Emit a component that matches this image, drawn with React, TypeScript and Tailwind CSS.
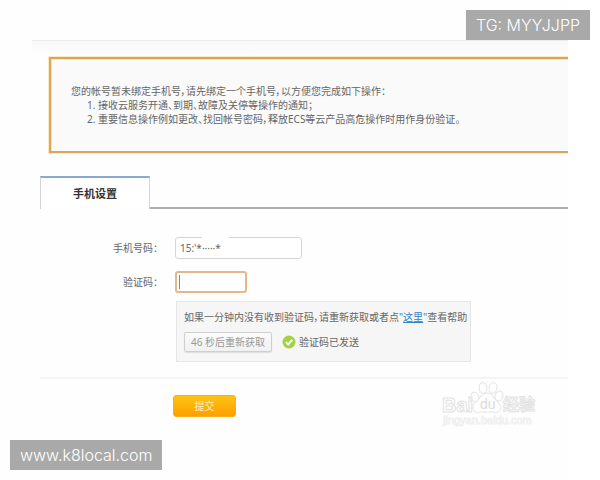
import React from "react";

function Notice() {
  return (
    <section className="ml-[17px] flex h-24 flex-col justify-center border-2 border-r-0 border-[#dda55c] bg-[#fafafa] pl-5 text-[10px] leading-[14px] text-[#666] shadow-[0_0_0_1px_#fde9c2,inset_1px_1px_0_#fbe0b4]">
      <p>您的帐号暂未绑定手机号，请先绑定一个手机号，以方便您完成如下操作：</p>
      <ol className="list-decimal pl-[27px]">
        <li>接收云服务开通、到期、故障及关停等操作的通知；</li>
        <li>重要信息操作例如更改、找回帐号密码，释放ECS等云产品高危操作时用作身份验证。</li>
      </ol>
    </section>
  );
}

function CheckIcon() {
  return (
    <svg viewBox="0 0 14 14" className="h-[14px] w-[14px]" aria-hidden="true">
      <circle cx="7" cy="7" r="6.5" fill="#a3d044" />
      <path d="M3.8 7.1 6.2 9.4 10.3 4.9" fill="none" stroke="#fff" strokeWidth="2" />
    </svg>
  );
}

function BaiduMark() {
  return (
    <svg
      viewBox="0 0 104 50"
      className="absolute top-[380px] right-[56px] h-[50px] w-[104px]"
      fill="#fefefe"
      stroke="#e2e2e2"
      strokeWidth="1"
      aria-hidden="true"
    >
      <ellipse cx="35" cy="17" rx="3.8" ry="5" transform="rotate(-25 35 17)" />
      <ellipse cx="43" cy="8" rx="3.8" ry="5.4" transform="rotate(-6 43 8)" />
      <ellipse cx="53" cy="8" rx="3.8" ry="5.4" transform="rotate(10 53 8)" />
      <ellipse cx="59" cy="16" rx="3.8" ry="5" transform="rotate(20 59 16)" />
      <path d="M47 13c-5 0-6 4-9 7-4 3-6 6-5 9 1 4 5 4 8 3h12c4 1 7 0 8-4 0-3-3-6-6-9-2-3-4-6-8-6Z" />
      <text x="2" y="32" fontSize="20" fontWeight="700" fontFamily="Liberation Sans, sans-serif">Bai</text>
      <text x="40" y="29" fontSize="14" fontFamily="Liberation Sans, sans-serif" fill="#dcdcdc" stroke="none">du</text>
      <text x="63" y="30" fontSize="16" fontWeight="700" fontFamily="Noto Sans CJK SC, sans-serif">经验</text>
      <text x="3" y="44" fontSize="11" fontFamily="Liberation Sans, sans-serif" stroke="#f0f0f0">jingyan.baidu.com</text>
    </svg>
  );
}

export default function App() {
  return (
    <main className="relative min-h-screen bg-[#fefefe] px-8 pt-10 font-['Noto_Sans','Noto_Sans_CJK_SC',sans-serif] text-[10px] leading-[14px] text-[#666] [font-feature-settings:'palt']">
      <header className="h-[17px] border-t border-[#ececec] bg-linear-to-b from-[#f8f8f8] to-[#fefefe]" />
      <Notice />

      <nav className="mt-[23px] ml-2 flex">
        <button className="h-[33px] w-[110px] border-x border-t-2 border-x-[#d4d4d4] border-t-[#8ba9cf] bg-white text-[11px] font-bold text-[#333]">
          手机设置
        </button>
        <span className="flex-1 border-b-2 border-[#adadad]" />
      </nav>

      <form className="ml-2" onSubmit={(e) => e.preventDefault()}>
        <div className="mt-7 flex items-center">
          <label htmlFor="phone" className="w-[118px] text-right">手机号码：</label>
          <div className="relative ml-[17px]">
            <input
              id="phone"
              defaultValue={"15:'*·····*"}
              className="block h-[22px] w-[127px] rounded-[3px] border border-[#d6d6d6] bg-white px-1 text-[10px] text-[#666]"
            />
            <span className="absolute top-0 left-[27px] h-[7px] w-[27px] bg-[#fefefe]" />
          </div>
        </div>
        <div className="mt-3 flex items-center">
          <label htmlFor="code" className="w-[118px] text-right">验证码：</label>
          <div className="relative ml-[17px]">
            <input
              id="code"
              className="block h-[22px] w-[72px] rounded-[3px] border-2 border-[#e3b88a] bg-white px-[3px] text-[10px] outline-none"
            />
            <span className="absolute top-1 left-1 h-[14px] w-px bg-[#888]" />
          </div>
        </div>

        <div className="mt-2 ml-[136px] h-[61px] w-[295px] border border-[#e6e6e6] bg-[#f6f6f6] pt-2 pl-[7px]">
          <p className="whitespace-nowrap">
            如果一分钟内没有收到验证码，请重新获取或者点
            <a href="#help" className="text-[#2f83cc]">"<span className="underline">这里</span>"</a>
            查看帮助
          </p>
          <div className="mt-2 flex items-center">
            <button
              type="button"
              className="h-5 w-[88px] rounded-[2px] border border-[#cfcfcf] bg-linear-to-b from-[#fbfbfb] to-[#f1f1f1] text-[10px] whitespace-nowrap text-[#999] shadow-[0_1px_1px_#ddd]"
            >
              46 秒后重新获取
            </button>
            <span className="ml-[10px] flex items-center gap-[3px]">
              <CheckIcon />
              验证码已发送
            </span>
          </div>
        </div>

        <hr className="mt-[15px] border-t-2 border-[#f4f4f4]" />
        <button className="mt-4 ml-[133px] block h-[22px] w-[63px] rounded-[3px] border border-[#fbaf17] bg-linear-to-b from-[#ffc313] to-[#fba000] text-[10px] text-[#fff0c0]">
          提交
        </button>
      </form>

      <div className="absolute inset-y-0 right-0 w-8 bg-white" />
      <BaiduMark />
      <div className="absolute top-[10px] right-[10px] flex h-[30px] items-center bg-[#a9a9a9] px-[10px] font-['Inter',sans-serif] text-[16px] font-light text-white [font-feature-settings:normal]">
        TG: MYYJJPP
      </div>
      <div className="absolute bottom-[10px] left-[10px] flex h-[30px] items-center bg-[#a9a9a9] px-[10px] font-['Inter',sans-serif] text-[16px] font-light text-white [font-feature-settings:normal]">
        www.k8local.com
      </div>
    </main>
  );
}
